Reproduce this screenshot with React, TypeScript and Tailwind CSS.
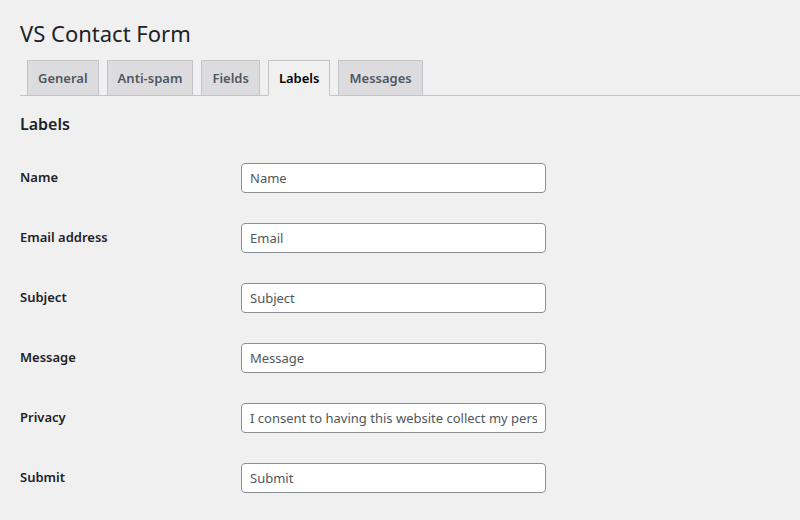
import React from "react";

const tabs = ["General", "Anti-spam", "Fields", "Labels", "Messages"];
const rows: [string, string][] = [
  ["Name", "Name"],
  ["Email address", "Email"],
  ["Subject", "Subject"],
  ["Message", "Message"],
  ["Privacy", "I consent to having this website collect my personal data via this form."],
  ["Submit", "Submit"],
];

export default function App() {
  return (
    <div
      className="min-h-[520px] w-[800px] bg-[#f0f0f1] text-[#1d2327] pl-[20px] pt-[18px]"
      style={{ fontFamily: '"Noto Sans", "Open Sans", sans-serif' }}
    >
      <h1 className="text-[22px] leading-[30px] font-normal text-[#1d2327] m-0">VS Contact Form</h1>
      <div className="mt-[12px] flex border-b border-[#c3c4c7] pl-[7px] gap-[8px]">
        {tabs.map((t) => {
          const active = t === "Labels";
          return (
            <div
              key={t}
              className={
                active
                  ? "-mb-px border border-[#c3c4c7] border-b-[#f0f0f1] bg-[#f0f0f1] px-[10px] py-[5px] text-[13px] leading-[24px] font-semibold text-black"
                  : "-mb-px border border-[#c3c4c7] bg-[#dcdcde] px-[10px] py-[5px] text-[13px] leading-[24px] font-semibold text-[#50575e]"
              }
            >
              {t}
            </div>
          );
        })}
      </div>
      <h2 className="mt-[17px] text-[16px] leading-[22px] font-semibold text-[#1d2327]">Labels</h2>
      <div className="mt-[13px] flex flex-col">
        {rows.map(([label, value]) => (
          <div key={label} className="flex h-[60px]">
            <div className="w-[221px] shrink-0 pt-[21px] text-[13px] leading-[17px] font-semibold text-[#1d2327]">
              {label}
            </div>
            <div className="pt-[15px]">
              <input
                readOnly
                value={value}
                className="h-[30px] w-[305px] rounded-[4px] border border-[#8c8f94] bg-white px-[8px] text-[13px] text-[#50575e] outline-none"
                style={{ fontFamily: '"Noto Sans", "Open Sans", sans-serif' }}
              />
            </div>
          </div>
        ))}
      </div>
    </div>
  );
}
